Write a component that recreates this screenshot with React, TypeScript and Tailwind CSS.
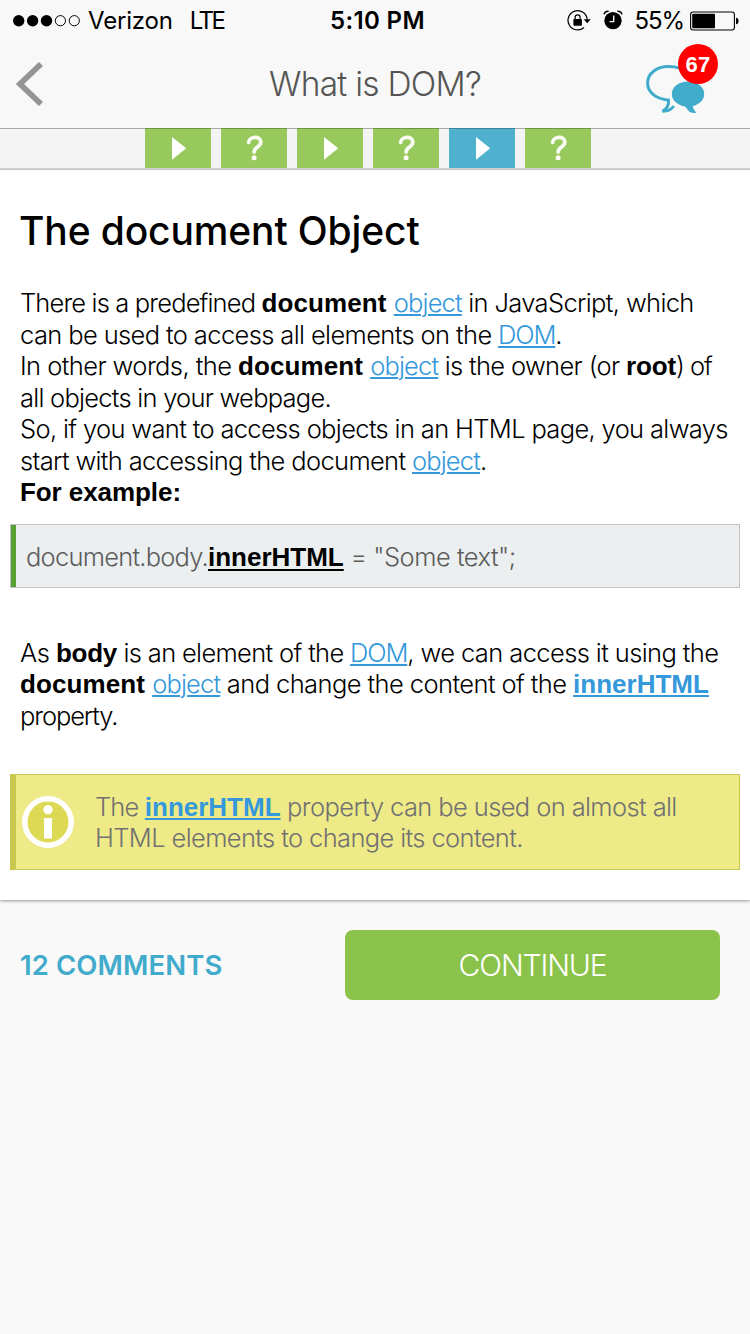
import type { ReactNode } from "react";

const LINK = "text-[#3498db] underline decoration-2 underline-offset-[2px]";
const BOLD = "font-['Liberation_Sans',sans-serif] text-[26px] font-bold";

function Line({ children }: { children: ReactNode }) {
  return <div className="h-[31.5px] whitespace-pre leading-[31.5px]">{children}</div>;
}

function ObjectLink() {
  return (
    <a className={`tracking-[-0.85px] ${LINK}`}>object</a>
  );
}

function DomLink() {
  return <a className={`tracking-[-1.15px] ${LINK}`}>DOM</a>;
}

function StatusBar() {
  return (
    <div className="grid h-10 grid-cols-3 pt-px text-[24px] leading-10 text-black">
      <div className="flex items-center pl-[12px]">
        <svg width="70" height="14" viewBox="0 0 70 14" className="shrink-0">
          <circle cx="6.7" cy="6.7" r="5.7" />
          <circle cx="20.6" cy="6.7" r="5.7" />
          <circle cx="34.5" cy="6.7" r="5.7" />
          <circle cx="48.4" cy="6.7" r="5.1" fill="none" stroke="black" strokeWidth="1" />
          <circle cx="62.3" cy="6.7" r="5.1" fill="none" stroke="black" strokeWidth="1" />
        </svg>
        <span className="ml-[6px] tracking-[-0.2px]">Verizon</span>
        <span className="ml-[17px] tracking-[-2.4px]">LTE</span>
      </div>
      <div className="pl-[80px] font-semibold tracking-[0.37px]">5:10 PM</div>
      <div className="flex items-center justify-end pr-[11px]">
        <svg width="24" height="22" viewBox="0 0 24 22" className="mr-[12px] shrink-0">
          <path d="M17 17.5A9.6 9.6 0 1 1 20.2 9.5" fill="none" stroke="black" strokeWidth="1.2" />
          <path d="M16.7 9.3H23.8L20.2 13.3Z" />
          <rect x="6.4" y="9" width="8.5" height="6.8" rx="0.7" />
          <path d="M8.1 9.2V7.4a2.5 2.5 0 0 1 5 0V9.2" fill="none" stroke="black" strokeWidth="1.2" />
        </svg>
        <svg width="20" height="20" viewBox="0 0 20 20" className="mb-[2px] mr-[12px] shrink-0">
          <circle cx="10" cy="10.6" r="8.7" />
          <path d="M10.7 5.5V11.6H6.5" fill="none" stroke="#f8f8f8" strokeWidth="1.4" />
          <path d="M1 4.4C1.5 2.3 3.3 1.1 5.6 1.2M14.4 1.2C16.7 1.1 18.5 2.3 19 4.4" fill="none" stroke="black" strokeWidth="1.5" />
        </svg>
        <span className="mr-[6px] tracking-[-1.1px]">55%</span>
        <svg width="49" height="20" viewBox="0 0 49 20" className="mb-px shrink-0">
          <rect x="0.6" y="1" width="43.8" height="18" rx="2.4" fill="none" stroke="black" strokeWidth="1.1" />
          <rect x="2.2" y="2.7" width="22.8" height="14.6" rx="1" />
          <path d="M46 6.8c3.4 0 3.4 6.4 0 6.4Z" />
        </svg>
      </div>
    </div>
  );
}

function ChatButton() {
  return (
    <div className="relative mr-[32px] h-[70px] w-[73px]">
      <svg width="73" height="74" viewBox="0 0 73 74">
        <path
          d="M42 33C38 28.8 31 26.6 23.5 26.6C11.5 26.6 2.6 33.5 2.6 43C2.6 52.5 11 58.8 23.5 60.2C24 65 22 69 17.5 71.3C22.5 71.4 26.5 69.5 28.8 66"
          fill="none"
          stroke="#41abcc"
          strokeWidth="3"
        />
        <ellipse cx="43" cy="54" rx="16.2" ry="12.6" fill="#41abcc" />
        <path d="M38 65C42 67 42 71 46 72.4C48 73 50 73 51 73C50.5 71 48.5 70 47.5 65.5Z" fill="#41abcc" />
      </svg>
      <div className="absolute left-[33px] top-[4px] flex size-10 items-center justify-center rounded-full bg-[#ff0000] font-['Liberation_Sans',sans-serif] text-[22px] font-bold tracking-[0.2px] text-white">
        67
      </div>
    </div>
  );
}

function Play() {
  return (
    <svg width="66" height="40" viewBox="0 0 66 40">
      <path d="M27 8L41.2 19.2L27 30.8Z" fill="white" />
    </svg>
  );
}

function Question() {
  return (
    <svg width="66" height="40" viewBox="0 0 66 40" fill="none" stroke="white">
      <path d="M27.6 13.4C28.2 6.8 39.8 6.8 39.8 13C39.8 18 33.1 18 33.1 23" strokeWidth="3.8" strokeLinecap="round" opacity="0.92" />
      <circle cx="33.1" cy="28.8" r="2.5" fill="white" stroke="none" />
    </svg>
  );
}

const steps = [
  { kind: "play", active: false },
  { kind: "quiz", active: false },
  { kind: "play", active: false },
  { kind: "quiz", active: false },
  { kind: "play", active: true },
  { kind: "quiz", active: false },
];

export default function App() {
  return (
    <div className="flex h-[1334px] w-[750px] flex-col overflow-hidden bg-[#f9f9f9] font-['Inter',sans-serif]">
      <div className="h-32 bg-[#f8f8f8]">
        <StatusBar />
        <header className="flex h-[88px] items-center justify-between">
          <svg width="60" height="60" viewBox="0 0 60 60" className="mr-[45px]">
            <path d="M41 10L20 30L41 50" fill="none" stroke="#939595" strokeWidth="5.8" />
          </svg>
          <h1 className="mt-px whitespace-nowrap text-[33.5px] font-light tracking-[-0.75px] text-[#555]">What is DOM?</h1>
          <div className="-mt-[18px]">
            <ChatButton />
          </div>
        </header>
      </div>

      <nav className="flex h-[42px] justify-center gap-[10px] border-b-2 border-[#d4d4d4] bg-[#f4f4f4] pr-[14px] shadow-[inset_0_1px_0_#a9a9a9]">
        {steps.map((step, i) => (
          <div
            key={i}
            className={`h-10 w-[66px] border-t ${step.active ? "border-[#3c8299] bg-[#50b1ce]" : "border-[#6f9446] bg-[#97c95d]"}`}
          >
            {step.kind === "play" ? <Play /> : <Question />}
          </div>
        ))}
      </nav>

      <main className="h-[730px] bg-white px-[10px] pt-[35px] text-[25.5px] font-light text-black shadow-[0_1px_3px_rgba(0,0,0,0.4)]">
        <h2 className="px-[9px] text-[39px] font-medium leading-[52px] tracking-[-0.13px]">The document Object</h2>

        <div className="mt-[30px] px-[10px]">
          <Line>
            <span className="tracking-[-0.85px]">There is a predefined </span>
            <b className={`tracking-[0.1px] ${BOLD}`}>document</b> <ObjectLink />
            <span className="tracking-[-0.64px]"> in JavaScript, which</span>
          </Line>
          <Line>
            <span className="tracking-[-0.62px]">can be used to access all elements on the </span>
            <DomLink />.
          </Line>
          <Line>
            <span className="tracking-[-0.57px]">In other words, the </span>
            <b className={`tracking-[0.1px] ${BOLD}`}>document</b> <ObjectLink />
            <span className="tracking-[-0.65px]"> is the owner (or </span>
            <b className={`tracking-[-0.14px] ${BOLD}`}>root</b>
            <span className="tracking-[-1.1px]">) of</span>
          </Line>
          <Line>
            <span className="tracking-[-0.75px]">all objects in your webpage.</span>
          </Line>
          <Line>
            <span className="tracking-[-0.65px]">So, if you want to access objects in an HTML page, you always</span>
          </Line>
          <Line>
            <span className="tracking-[-0.65px]">start with accessing the document </span>
            <ObjectLink />.
          </Line>
          <Line>
            <b className={`tracking-[-0.07px] ${BOLD}`}>For example:</b>
          </Line>
        </div>

        <div className="mt-[16px] flex h-[64px] items-center whitespace-pre border border-[#c0c2c3] bg-[#ebeff0] text-[#5c5c5c]">
          <div className="h-full w-[5px] bg-[#589f34]" />
          <div className="pl-[10px] pt-[3px]">
            <span className="tracking-[-0.77px]">document.body.</span>
            <b className={`text-black underline decoration-2 underline-offset-[3px] ${BOLD}`}>innerHTML</b>
            <span className="tracking-[-0.5px]"> = "Some text";</span>
          </div>
        </div>

        <div className="mt-[49px] px-[10px]">
          <Line>
            <span className="tracking-[-0.51px]">As </span>
            <b className={`tracking-[-0.28px] ${BOLD}`}>body</b>
            <span className="tracking-[-0.66px]"> is an element of the </span>
            <DomLink />
            <span className="tracking-[-0.6px]">, we can access it using the</span>
          </Line>
          <Line>
            <b className={`tracking-[0.1px] ${BOLD}`}>document</b> <ObjectLink />
            <span className="tracking-[-0.58px]"> and change the content of the </span>
            <b className={`${BOLD} ${LINK}`}>innerHTML</b>
          </Line>
          <Line>
            <span className="tracking-[-1.1px]">property.</span>
          </Line>
        </div>

        <div className="mt-[43px] flex h-24 items-center border border-l-[6px] border-[#c9c64f] bg-[#eeea88] text-[#717171]">
          <svg width="52" height="52" viewBox="0 0 52 52" className="ml-[6px] mr-[21px] shrink-0">
            <circle cx="26" cy="26" r="23.2" fill="#ded954" stroke="white" strokeWidth="5.5" />
            <circle cx="26" cy="13.7" r="4.7" fill="white" />
            <rect x="22" y="22" width="8" height="20.5" rx="0.8" fill="white" />
          </svg>
          <div>
            <Line>
              <span className="tracking-[-0.85px]">The </span>
              <b className={`${BOLD} ${LINK}`}>innerHTML</b>
              <span className="tracking-[-0.61px]"> property can be used on almost all</span>
            </Line>
            <Line>
              <span className="tracking-[-0.62px]">HTML elements to change its content.</span>
            </Line>
          </div>
        </div>
      </main>

      <footer className="mt-[30px] flex h-[70px] items-center justify-between pl-[20px] pr-[30px]">
        <a className="mt-[2px] text-[27.5px] font-semibold tracking-[0.1px] text-[#41abcc]">12 COMMENTS</a>
        <button className="h-[70px] w-[375px] rounded-[8px] bg-[#8bc34a] pt-px text-[30px] font-light tracking-[-1.15px] text-white">
          CONTINUE
        </button>
      </footer>
    </div>
  );
}
